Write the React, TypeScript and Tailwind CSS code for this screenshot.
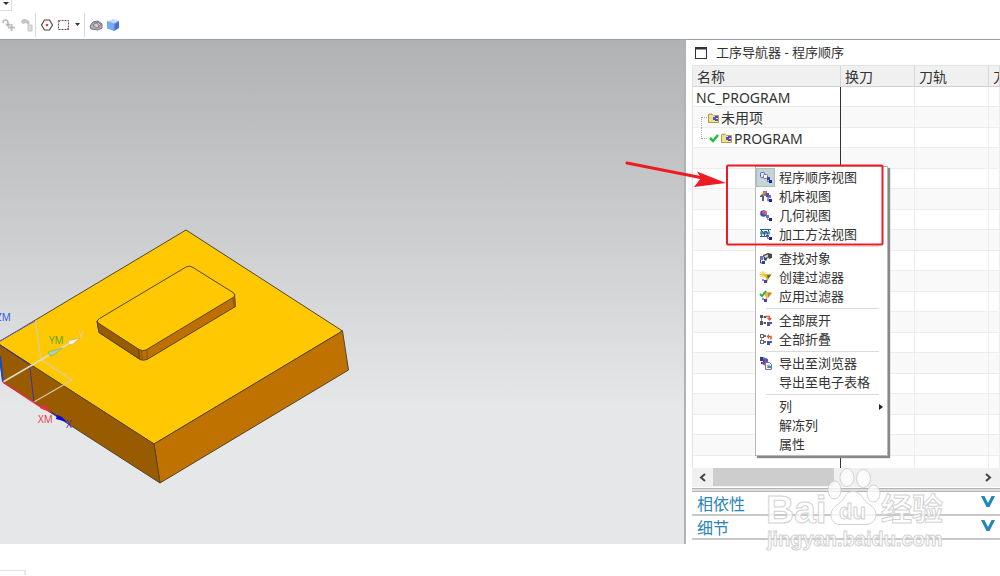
import type { ReactNode } from "react";

const uiFont = "font-['Noto_Sans','Noto_Sans_CJK_SC',sans-serif]";

type IconName =
  | "order" | "machine" | "geometry" | "method"
  | "find" | "createFilter" | "applyFilter"
  | "expand" | "collapse" | "export";

type MenuItem = { label: string; icon?: IconName; active?: boolean; submenu?: boolean };

const menuGroups: MenuItem[][] = [
  [
    { label: "程序顺序视图", icon: "order", active: true },
    { label: "机床视图", icon: "machine" },
    { label: "几何视图", icon: "geometry" },
    { label: "加工方法视图", icon: "method" },
  ],
  [
    { label: "查找对象", icon: "find" },
    { label: "创建过滤器", icon: "createFilter" },
    { label: "应用过滤器", icon: "applyFilter" },
  ],
  [
    { label: "全部展开", icon: "expand" },
    { label: "全部折叠", icon: "collapse" },
  ],
  [{ label: "导出至浏览器", icon: "export" }, { label: "导出至电子表格" }],
  [{ label: "列", submenu: true }, { label: "解冻列" }, { label: "属性" }],
];

const iconShapes: Record<IconName, ReactNode> = {
  order: (
    <>
      <rect x="1.5" y="1.5" width="4" height="5" rx="1" fill="#e6e9ff" stroke="#5a5fc0" />
      <rect x="4.5" y="3.5" width="4" height="4" rx="1" fill="#fff" stroke="#6a70c8" />
      <path d="M8.500 7v3.500h2" stroke="#6a70c8" fill="none" />
      <rect x="8" y="6" width="3" height="3" fill="#3d42b8" />
      <rect x="10" y="9" width="3" height="3" fill="#1d2196" />
    </>
  ),
  machine: (
    <>
      <path d="M1 6l2-2h2v7H3V7H1z" fill="#5a5f80" />
      <path d="M4 1h4v5H4z" fill="#5878b8" />
      <path d="M3 4l3-3 2 1-3 4z" fill="#d98238" />
      <path d="M9 4v6.500h2" stroke="#6a70c8" strokeWidth="1.500" fill="none" />
      <rect x="7" y="3" width="3" height="4" fill="#4e52b0" />
      <rect x="10" y="5" width="2" height="3" fill="#6a70c8" />
      <rect x="10" y="9" width="3" height="3" fill="#1d2196" />
    </>
  ),
  geometry: (
    <>
      <circle cx="4.500" cy="4.500" r="3.300" fill="#3c50cc" />
      <path d="M3 4l1-2.500 3.500 1V5l-2 1z" fill="#e25c50" />
      <path d="M8.500 6.500v4h2" stroke="#8a8fd0" fill="none" />
      <rect x="7" y="6" width="3" height="3" fill="#6a70c8" />
      <rect x="10" y="9" width="3" height="3" fill="#1d2196" />
    </>
  ),
  method: (
    <>
      <path d="M1 1.500h11M1 8.500h6M2.500 2v6M5.500 3v5M9.500 2v3" stroke="#2f5f92" fill="none" />
      <path d="M1 3.500h10v3H1z" fill="#5a9bb8" />
      <path d="M3 3l2 3 2-3 2 3" stroke="#28507c" fill="none" />
      <path d="M8.500 6v4.500h2" stroke="#6a70c8" fill="none" />
      <rect x="10" y="9" width="3" height="3" fill="#1d2196" />
      <rect x="7" y="7" width="3" height="2" fill="#4e52b0" />
    </>
  ),
  find: (
    <>
      <path d="M1.500 4v7h3" stroke="#343aa5" fill="none" />
      <rect x="1" y="4" width="3" height="4" fill="#6a70c8" />
      <rect x="3" y="9" width="3" height="3" fill="#343aa5" />
      <path d="M4 3l5-2 4 1v4l-3 1-1-2-2 4-2-1z" fill="#44474f" />
      <path d="M5 4l4-1.500v2L6.500 6z" fill="#d9dde2" />
    </>
  ),
  createFilter: (
    <>
      <path d="M3 3h10l-3 4-2 5H6l1-5z" fill="#e2b832" />
      <path d="M8 4h4l-3 4z" fill="#6a604a" />
      <path d="M4 0v7M.500 3.500h7M1.500 1l5 5M6.500 1l-5 5" stroke="#f2c62c" fill="none" />
      <rect x="5" y="9" width="3" height="3" fill="#3e44b4" />
      <rect x="3" y="8" width="2" height="2" fill="#8a8fd0" />
    </>
  ),
  applyFilter: (
    <>
      <path d="M4 2h9l-4 5-2 5H6l1-5z" fill="#f0b83a" />
      <path d="M9 3h4l-4 5z" fill="#b38c46" />
      <path d="M1 4l2 2 4-5" stroke="#26b248" strokeWidth="2" fill="none" />
      <rect x="5" y="9" width="3" height="3" fill="#3e44b4" />
      <rect x="3" y="8" width="2" height="2" fill="#8a8fd0" />
    </>
  ),
  expand: (
    <>
      <path d="M2.500 3v7M2.500 3H6M2.500 9H6" stroke="#85878c" fill="none" />
      <path d="M1 1h3v3H1zM1 7h3v4H1zM5 2h2v2H5zM5 8h2v2H5z" fill="#55575d" />
      <path d="M7 2.500h3.500v2" stroke="#d9582e" strokeWidth="1.500" fill="none" />
      <path d="M8 4h5l-2.500 3z" fill="#d9582e" />
      <path d="M8 8h3v4H8zM11 8h2v2h-2z" fill="#4b51ae" />
    </>
  ),
  collapse: (
    <>
      <path d="M2.500 4v5M3 3.500h3M3 9.500h3" stroke="#97999e" fill="none" />
      <rect x="1.500" y="1.500" width="3" height="3" fill="#fff" stroke="#686a70" />
      <rect x="1.500" y="7.500" width="3" height="3" fill="#fff" stroke="#686a70" />
      <path d="M5 2h2v2H5zM5 8h2v2H5z" fill="#686a70" />
      <path d="M12 6.500V3.500H9" stroke="#d9582e" strokeWidth="1.500" fill="none" />
      <path d="M10 1v5L7.500 3.500z" fill="#d9582e" />
      <path d="M8 8h3v4H8zM11 8h2v2h-2z" fill="#4b51ae" />
    </>
  ),
  export: (
    <>
      <path d="M1 0h3v4H1zM4 2h3v4H4zM2 5h2v2H2z" fill="#33379e" />
      <path d="M4 0l5 2v3H5z" fill="#5c5da0" />
      <path d="M3 5l5 1-1 3-4-2z" fill="#c0309e" />
      <path d="M6.500 5.500h4l2 2v5h-6z" fill="#eef0f9" stroke="#6c76b5" />
      <path d="M8 8h3v3H8z" fill="#a8b84a" />
      <path d="M9 9h3v2H9z" fill="#4a86c8" />
    </>
  ),
};

function MenuIcon({ name }: { name: IconName }) {
  return (
    <svg width="14" height="14" viewBox="0 0 14 14" aria-hidden="true">
      {iconShapes[name]}
    </svg>
  );
}

function FolderIcon() {
  return (
    <svg width="12" height="12" viewBox="0 0 12 12" className="shrink-0" aria-hidden="true">
      <path d="M.5 2.500h4l1 1h5v7H.5z" fill="#f3df8c" stroke="#b09a4e" />
      <path d="M1 1.500h3v1H1z" fill="#cdb765" />
      <path d="M5 5h3v3H5zM7 4h3v2H7zM7 7h3v2H7z" fill="#4a4fd0" />
    </svg>
  );
}

function ToolButton({ label, children }: { label: string; children: ReactNode }) {
  return (
    <button type="button" aria-label={label} className="flex h-6 w-[17px] items-center justify-center">
      <svg width="14" height="14" viewBox="0 0 14 14" aria-hidden="true">{children}</svg>
    </button>
  );
}

function Toolbar() {
  return (
    <header className="h-10 bg-white">
      <div className="flex h-[11px]">
        <button type="button" aria-label="More" className="flex w-3 justify-center border-r border-b border-[#dcdcdc]">
          <svg width="6" height="6" viewBox="0 0 6 6" className="mt-px" aria-hidden="true">
            <path d="M0 1h6L3 4z" fill="#333" />
          </svg>
        </button>
      </div>
      <div className="flex h-[27px] items-center">
        <ToolButton label="Move">
          <path d="M1 5c0-4 5-4 5 0v3M4 6l2 2 2-2" fill="none" stroke="#b5b5b5" strokeWidth="1.500" />
          <path d="M9.500 6v7M6 9.500h7" stroke="#bdbdbd" strokeWidth="2" />
        </ToolButton>
        <ToolButton label="Copy">
          <path d="M2 4c0-4 7-4 9 1l-2 2-2-2-3 1z" fill="#c6c6c6" />
          <path d="M9 7h4v6H9z" fill="#dedede" stroke="#c4c4c4" />
        </ToolButton>
        <span className="ml-px h-6 border-r border-[#d8d8d8]" />
        <span className="w-[2px]" />
        <ToolButton label="Point">
          <path d="M4.500 2h5l3 5-3 5h-5l-3-5z" fill="none" stroke="#4a4a4a" strokeWidth="1.200" />
          <circle cx="7" cy="7" r="1.300" fill="#e5422d" />
        </ToolButton>
        <ToolButton label="Rectangle select">
          <path d="M1.500 2.500h10v9h-10z" fill="none" stroke="#555" strokeDasharray="2 1" />
          <path d="M1 2h2v2H1zM10 10h2v2h-2z" fill="#e2584a" />
        </ToolButton>
        <button type="button" aria-label="Selection options" className="flex h-6 w-[10px] items-center justify-center">
          <svg width="5" height="3" viewBox="0 0 5 3" aria-hidden="true"><path d="M0 0h5L2.500 3z" fill="#333" /></svg>
        </button>
        <span className="ml-[2px] h-6 border-r border-[#d8d8d8]" />
        <span className="w-[2px]" />
        <ToolButton label="Shaded body">
          <path d="M1 8l3-4 5-1 4 3v4l-4 2-7-1z" fill="#a9adb5" stroke="#73777f" />
          <path d="M4 7l4-3 4 2-4 4z" fill="#d2d6dc" stroke="#7b7f87" />
          <path d="M5 4l4 2 1 4" stroke="#cf6a61" fill="none" />
        </ToolButton>
        <ToolButton label="Cube">
          <path d="M1 3.500L7 1l6 2-5 3z" fill="#b9dcff" />
          <path d="M1 3.500L8 6v7l-7-2.500z" fill="#73adf2" />
          <path d="M8 6l5-3v7l-5 3z" fill="#4470d0" />
          <path d="M1 3.500L8 6v7M8 6l5-3" stroke="#8f9bd5" fill="none" />
        </ToolButton>
      </div>
    </header>
  );
}

function Viewport() {
  return (
    <section
      aria-label="3D"
      className="min-w-0 flex-1 overflow-hidden border-t border-r-2 border-t-[#9aa1a6] border-r-[#b0b2b5] bg-linear-to-b from-[#b1b2b4] via-[#e5e7e8] via-73% to-[#e6e7e9]"
    >
      <svg className="block h-full w-full font-['Open_Sans',sans-serif] text-[10px]" role="img" aria-label="Part model">
        <g transform="translate(0 -40)" strokeLinejoin="round">
          <g stroke="#54462c" strokeWidth="1">
            <path d="M186 230L342.500 331 154 444-3 343z" fill="#ffc800" />
            <path d="M342.500 331l6 39L160 483l-6-39z" fill="#c07200" />
            <path d="M154 444l6 39L3 382l-6-39z" fill="#985b00" />
            <path d="M97 321l2 11.500L140 359.500Q143 361 147 359.500L235.500 306.500 234.500 294z" fill="#bd7000" />
            <path d="M97 321l2 11.500L139.500 359l-1-12z" fill="#985b00" />
            <path
              d="M99 323.500Q95.500 321 99.500 318.500L186 267Q190 265 193 267.500L233 292.500Q236.500 295 233 297.500L146 350Q142.500 351.500 139 349.500z"
              fill="#ffc800"
            />
            <path d="M139 350l1 9M141.500 351l1 9M147 350v9M233 298l1 9" stroke="#6f4710" strokeWidth=".7" />
          </g>
          <g fill="none">
            <path d="M-1 341.500L36 320.500" stroke="#6260cf" />
            <path d="M0 345l29.500 19.500L34 402" stroke="#4130a4" />
            <path d="M0 356l3 26" stroke="#1947c9" strokeWidth="2" />
            <path d="M35.500 320.500L41 359.500 72 380 34 402" stroke="#d5cbb0" strokeWidth="1.200" />
            <path d="M3 382L74 340.500" stroke="#d8dfc6" strokeWidth="1.500" />
            <path d="M3 382L44 409" stroke="#dc303b" strokeWidth="1.500" />
            <path d="M50 411l10 7" stroke="#1c23c2" />
          </g>
          <path d="M48 352l2 4 4-1 8-7z" fill="#a4d798" stroke="#73986c" strokeWidth=".5" />
          <path d="M68 341l1 4 4-1 7-6z" fill="#f5f2e8" stroke="#aaa18b" strokeWidth=".5" />
          <path d="M40 408l2-3 5 1 5 7z" fill="#dc343c" />
          <path d="M56 419l1-4 5 2 5 5z" fill="#0808d8" />
          <text x="-4" y="321" fill="#2858f0">ZM</text>
          <text x="49" y="344" fill="#56a02e">YM</text>
          <text x="79" y="339" fill="#e0d3a8">Y</text>
          <text x="38" y="423" fill="#e0403e">XM</text>
          <text x="66" y="428" fill="#3030ef">X</text>
        </g>
      </svg>
    </section>
  );
}

function NavigatorTable() {
  const cell = "border-r border-[#ededed] p-0 shadow-[inset_0_-1px_#ededed]";
  const nameCell = "border-r border-[#333] p-0 shadow-[inset_0_-1px_#ededed]";
  const head = "h-[21px] overflow-hidden border-r border-b border-r-[#d8d8d8] border-b-[#d0d0d0] p-0 pl-1 text-left font-normal whitespace-nowrap";
  const names: ReactNode[] = [
    <span className="pl-[3px]">NC_PROGRAM</span>,
    <span className="flex items-center gap-px pl-2">
      <span className="mt-[9px] h-[11px] w-[6px] border-t border-l border-dotted border-[#aaa]" />
      <FolderIcon />
      未用项
    </span>,
    <span className="flex items-center gap-px pl-2">
      <span className="mb-[9px] h-[11px] w-[6px] border-b border-l border-dotted border-[#aaa]" />
      <svg width="10" height="10" viewBox="0 0 10 10" className="mx-px" aria-hidden="true">
        <path d="M1 5l3 3 5-6" fill="none" stroke="#19c433" strokeWidth="2.500" />
      </svg>
      <FolderIcon />
      PROGRAM
    </span>,
  ];
  return (
    <table className="w-full table-fixed border-separate border-spacing-0 border-t border-l border-[#e2e2e2] text-sm leading-[19px] text-[#333]">
      <colgroup>
        <col className="w-[148px]" />
        <col className="w-[74px]" />
        <col className="w-[74px]" />
        <col />
      </colgroup>
      <thead className="bg-[#f0f0f0]">
        <tr>
          <th className={head}>名称</th>
          <th className={head}>换刀</th>
          <th className={head}>刀轨</th>
          <th className={head}>刀</th>
        </tr>
      </thead>
      <tbody>
        {Array.from({ length: 18 }, (_, i) => (
          <tr key={i} className="odd:h-[20px] odd:bg-white even:h-[21px] even:bg-[#f9f9f9]">
            <td className={nameCell}>{names[i]}</td>
            <td className={cell} />
            <td className={cell} />
            <td className={cell} />
          </tr>
        ))}
        <tr className="h-[12px]">
          <td className="border-r border-[#333] p-0" />
          <td className="border-r border-[#ededed] p-0" />
          <td className="border-r border-[#ededed] p-0" />
          <td className="border-r border-[#ededed] p-0" />
        </tr>
      </tbody>
    </table>
  );
}

function ContextMenu() {
  return (
    <div
      role="menu"
      className="absolute top-[126px] left-[69px] w-[133px] border border-[#b8b8b8] bg-white pt-px pb-px text-[13px] text-[#333] shadow-[2px_2px_1px_#888]"
    >
      {menuGroups.map((group, i) => (
        <div key={i}>
          {i > 0 && (
            <div className="mr-2 ml-[10px] flex h-[5px] items-center">
              <span className="h-px flex-1 bg-[#dadada]" />
            </div>
          )}
          {group.map((item) => (
            <button key={item.label} type="button" role="menuitem" className="flex h-[19px] w-full items-center text-left whitespace-nowrap">
              <span
                className={`mr-[4px] flex h-[19px] w-[19px] items-center justify-center ${
                  item.active ? "border border-[#a9bebb] bg-[#c3d6d3]" : ""
                }`}
              >
                {item.icon && <MenuIcon name={item.icon} />}
              </span>
              {item.label}
              {item.submenu && (
                <svg width="4" height="6" viewBox="0 0 4 6" className="mr-1 ml-auto" aria-hidden="true">
                  <path d="M0 0l4 3-4 3z" fill="#222" />
                </svg>
              )}
            </button>
          ))}
        </div>
      ))}
    </div>
  );
}

function Annotation() {
  return (
    <svg className="pointer-events-none absolute top-0 left-0 overflow-visible" width="200" height="210" aria-hidden="true">
      <path d="M-59 123L22 139" stroke="#ed1c24" strokeWidth="3" strokeLinecap="round" />
      <path d="M11 131.500L40 143 8 147l7-9z" fill="#ed1c24" />
      <rect x="41" y="125.500" width="155.500" height="79" rx="1" fill="none" stroke="#ed1c24" strokeWidth="2" />
    </svg>
  );
}

function Watermark() {
  return (
    <svg
      className="pointer-events-none absolute right-0 bottom-0 overflow-visible"
      width="240"
      height="80"
      viewBox="760 465 240 80"
      fill="#fff"
      fillOpacity=".75"
      stroke="#d2d2d2"
      strokeWidth="1"
      fontWeight="bold"
    >
      <text x="766" y="524" fontSize="39" className="font-['Liberation_Sans',sans-serif]">Bai</text>
      <ellipse cx="847" cy="478.500" rx="7" ry="9" />
      <ellipse cx="863.500" cy="479.500" rx="7" ry="9" />
      <ellipse cx="834.500" cy="491" rx="6.500" ry="9" />
      <ellipse cx="873.500" cy="494.500" rx="6.500" ry="8.500" />
      <path d="M853 492.500c5 0 8 3 11 8 5 6 12 8 12 15 0 6-5 10-10 10H840c-6 0-9-4-9-10 0-7 7-9 12-15 3-5 5-8 10-8z" />
      <text x="839" y="520" fontSize="22" className="font-['Liberation_Sans',sans-serif]">du</text>
      <text x="881" y="521" fontSize="31" className="font-['Noto_Sans_CJK_SC',sans-serif]">经验</text>
      <text x="767" y="547" fontSize="20" className="font-['Liberation_Sans',sans-serif]">jingyan.baidu.com</text>
    </svg>
  );
}

function SectionBar({ title }: { title: string }) {
  return (
    <button
      type="button"
      className="flex h-6 w-full items-center justify-between border-b-2 border-[#c9c9c9] pt-[2px] pr-[5px] pl-[5px] text-base leading-5 text-[#2b86b5]"
    >
      {title}
      <svg width="14" height="12" viewBox="0 0 14 12" className="mb-1" aria-hidden="true">
        <path d="M0 0h3.500L7 7l3.500-7H14L8.500 11h-3z" fill="#2586b8" />
      </svg>
    </button>
  );
}

function Navigator() {
  return (
    <aside className="relative w-[314px] shrink-0 border-t border-[#9aa1a6] bg-white pl-[6px]">
      <h1 className="flex h-[25px] items-center gap-[9px] pt-px pl-[3px] text-[13px] text-[#333]">
        <svg width="12" height="12" viewBox="0 0 12 12" aria-hidden="true">
          <rect x=".5" y=".5" width="11" height="11" fill="#fff" stroke="#333" />
          <path d="M0 1.500h12" stroke="#333" strokeWidth="2" />
        </svg>
        工序导航器 - 程序顺序
      </h1>
      <NavigatorTable />
      <div className="flex h-[19px] items-stretch bg-[#f0f0f0]">
        <button type="button" aria-label="Scroll left" className="flex w-[21px] items-center justify-center">
          <svg width="7" height="9" viewBox="0 0 7 9" aria-hidden="true">
            <path d="M6 1L2 4.500 6 8" fill="none" stroke="#444" strokeWidth="2" />
          </svg>
        </button>
        <div className="flex-1"><div className="h-[18px] w-[121px] bg-[#cdcdcd]" /></div>
        <button type="button" aria-label="Scroll right" className="flex w-6 items-center justify-center">
          <svg width="7" height="9" viewBox="0 0 7 9" aria-hidden="true">
            <path d="M1 1l4 3.500L1 8" fill="none" stroke="#444" strokeWidth="2" />
          </svg>
        </button>
      </div>
      <div className="mt-px h-1 border-y border-[#b5b5b5] bg-[#dedede]" />
      <SectionBar title="相依性" />
      <SectionBar title="细节" />
      <div className="h-1" />
      <ContextMenu />
      <Watermark />
      <Annotation />
    </aside>
  );
}

export default function App() {
  return (
    <main className={`min-h-screen overflow-hidden bg-white ${uiFont}`}>
      <Toolbar />
      <div className="-mt-px flex">
        <Viewport />
        <Navigator />
      </div>
      <footer className="pt-[26px]">
        <div className="h-[5px] w-[26px] border-t border-r-2 border-[#e5e5e5]" />
      </footer>
    </main>
  );
}
